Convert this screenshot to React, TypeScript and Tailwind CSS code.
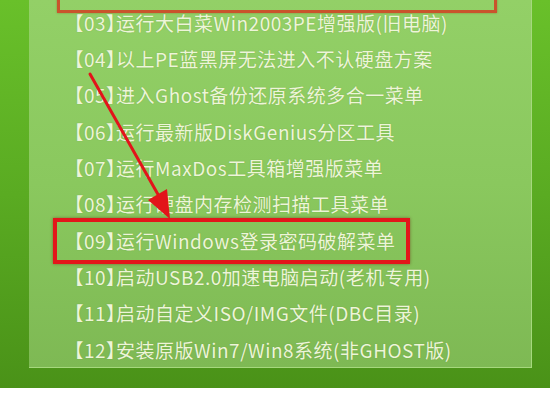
import React from "react";

const items = [
  "【03】运行大白菜Win2003PE增强版(旧电脑)",
  "【04】以上PE蓝黑屏无法进入不认硬盘方案",
  "【05】进入Ghost备份还原系统多合一菜单",
  "【06】运行最新版DiskGenius分区工具",
  "【07】运行MaxDos工具箱增强版菜单",
  "【08】运行硬盘内存检测扫描工具菜单",
  "【09】运行Windows登录密码破解菜单",
  "【10】启动USB2.0加速电脑启动(老机专用)",
  "【11】启动自定义ISO/IMG文件(DBC目录)",
  "【12】安装原版Win7/Win8系统(非GHOST版)",
];

export default function App() {
  return (
    <div className="relative w-[550px] h-[400px] bg-white overflow-hidden">
      <div className="h-[388px] pl-[29px] pr-[18px] pb-[20px] bg-gradient-to-b from-[#69c02a] via-[#5aab22] to-[#4a9218]">
        <div className="relative h-full bg-gradient-to-b from-[#93d067] via-[#8ac85e] to-[#7eb954] border-r border-b border-[#a6d87e] pt-[5px] pl-[45px]">
          <div className="absolute left-[28px] top-[-20px] w-[440px] h-[33px] border-[3px] border-[#c9542c] shadow-[0_0_2px_rgba(120,40,0,0.4)]" />
          <div className="flex flex-col">
            {items.map((t, i) => (
              <div
                key={i}
                className="relative h-[36.3px] flex items-center text-[19px] text-[#edf5d8] tracking-[0.5px] whitespace-nowrap [font-feature-settings:'halt'] [text-shadow:0_0_1px_rgba(60,100,20,0.35)]"
                style={{ fontFamily: '"Noto Sans CJK SC", "Noto Sans", sans-serif' }}
              >
                {t}
                {i === 6 && (
                  <div className="absolute left-[-21px] top-[-5px] w-[357px] h-[46px] border-[4px] border-[#e3161a] shadow-[0_0_3px_rgba(100,0,0,0.45)]" />
                )}
              </div>
            ))}
          </div>
        </div>
      </div>
      <svg className="absolute left-0 top-0 pointer-events-none" width="550" height="400" viewBox="0 0 550 400">
        <line x1="90" y1="74" x2="160" y2="198" stroke="#e2141a" strokeWidth="3" strokeLinecap="round" />
        <polygon points="170,219 148,200 167,189" fill="#e2141a" />
      </svg>
    </div>
  );
}
